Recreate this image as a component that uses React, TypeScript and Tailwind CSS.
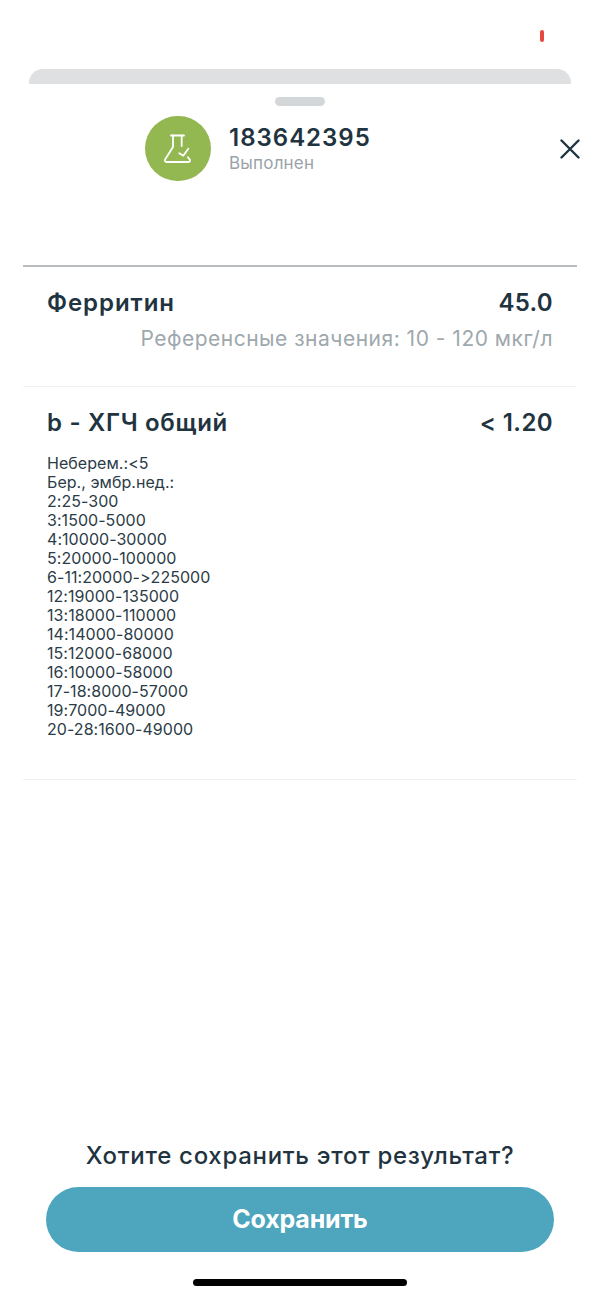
import React from 'react';

const RANGES = [
  'Неберем.:<5',
  'Бер., эмбр.нед.:',
  '2:25-300',
  '3:1500-5000',
  '4:10000-30000',
  '5:20000-100000',
  '6-11:20000->225000',
  '12:19000-135000',
  '13:18000-110000',
  '14:14000-80000',
  '15:12000-68000',
  '16:10000-58000',
  '17-18:8000-57000',
  '19:7000-49000',
  '20-28:1600-49000',
];

function FlaskIcon() {
  return (
    <svg width="30" height="30" viewBox="0 0 30 30" fill="none" stroke="white" strokeWidth="1.8" strokeLinecap="round" strokeLinejoin="round">
      <path d="M8 1.5h13" />
      <path d="M10 1.5V13L2.2 25.2C1.4 26.6 2 28 3.6 28H25.5c1.6 0 2-1.6 1-2.8l-1.6-2" />
      <path d="M18.7 1.5V12" />
      <path d="M16.3 19.2l4 2.6 5-7" />
    </svg>
  );
}

export default function App() {
  return (
    <div className="flex h-[1297px] w-[600px] flex-col overflow-hidden bg-white font-['Inter',sans-serif] text-[#1f3440] [font-feature-settings:'calt'_0]">
      {/* status bar */}
      <div className="flex h-[69px] justify-end pr-[56px] pt-[30px]">
        <div className="h-[12px] w-[4px] rounded-[2px] bg-[#e5483c]" />
      </div>

      {/* sheet behind */}
      <div className="mx-[29px] h-[15px] rounded-t-[14px] bg-[#dfe0e1]" />

      <div className="flex flex-1 flex-col">
        <div className="flex justify-center pt-[13px]">
          <div className="h-[9px] w-[50px] rounded-full bg-[#d3d7da]" />
        </div>

        {/* order header */}
        <div className="relative mx-[23px] flex h-[161px] items-start border-b-2 border-[#b9bcbe] pl-[122px] pt-[10px]">
          <div className="flex h-[65px] w-[66px] items-center justify-center rounded-full bg-[#94b851]">
            <FlaskIcon />
          </div>
          <div className="ml-[18px] pt-[7px]">
            <div className="text-[24px] font-semibold leading-[30px] tracking-[1px]">183642395</div>
            <div className="text-[17px] leading-[20px] tracking-[0.2px] text-[#9aa3a8]">Выполнен</div>
          </div>
          <svg className="absolute left-[537px] top-[33px]" width="20" height="20" viewBox="0 0 20 20" fill="none" stroke="#1f3440" strokeWidth="2.4" strokeLinecap="round">
            <path d="M1.5 1.5l17 17M18.5 1.5l-17 17" />
          </svg>
        </div>

        {/* results */}
        <div className="mx-[23px] flex h-[120px] flex-col border-b border-[#f0f1f2] px-[24px] pt-[21px]">
          <div className="flex items-center justify-between text-[24px] font-semibold leading-[30px]">
            <span className="tracking-[0.95px]">Ферритин</span>
            <span className="tracking-[0.3px]">45.0</span>
          </div>
          <div className="mt-[6px] text-right text-[21px] leading-[30px] tracking-[0.5px] text-[#9ea8ad]">
            Референсные значения: 10 - 120 мкг/л
          </div>
        </div>

        <div className="mx-[23px] flex h-[393px] flex-col border-b border-[#f0f1f2] px-[24px] pt-[21px]">
          <div className="flex items-center justify-between text-[24px] font-semibold leading-[30px]">
            <span className="tracking-[0.7px]">b - ХГЧ общий</span>
            <span className="tracking-[0.4px]">&lt; 1.20</span>
          </div>
          <div className="mt-[16px] text-[16px] leading-[19px] tracking-[0.05px] text-[#2b3c47]">
            {RANGES.map((line) => (
              <div key={line}>{line}</div>
            ))}
          </div>
        </div>

        {/* save prompt */}
        <div className="flex flex-1 flex-col items-center justify-end">
          <div className="text-[24px] font-medium leading-[30px] tracking-[0.7px]">Хотите сохранить этот результат?</div>
          <button className="mt-[16px] h-[65px] w-[508px] rounded-full bg-[#4da6bd] text-[25px] font-bold tracking-[-0.2px] text-white">
            Сохранить
          </button>
          <div className="mb-[11px] mt-[27px] h-[7px] w-[214px] rounded-full bg-black" />
        </div>
      </div>
    </div>
  );
}
